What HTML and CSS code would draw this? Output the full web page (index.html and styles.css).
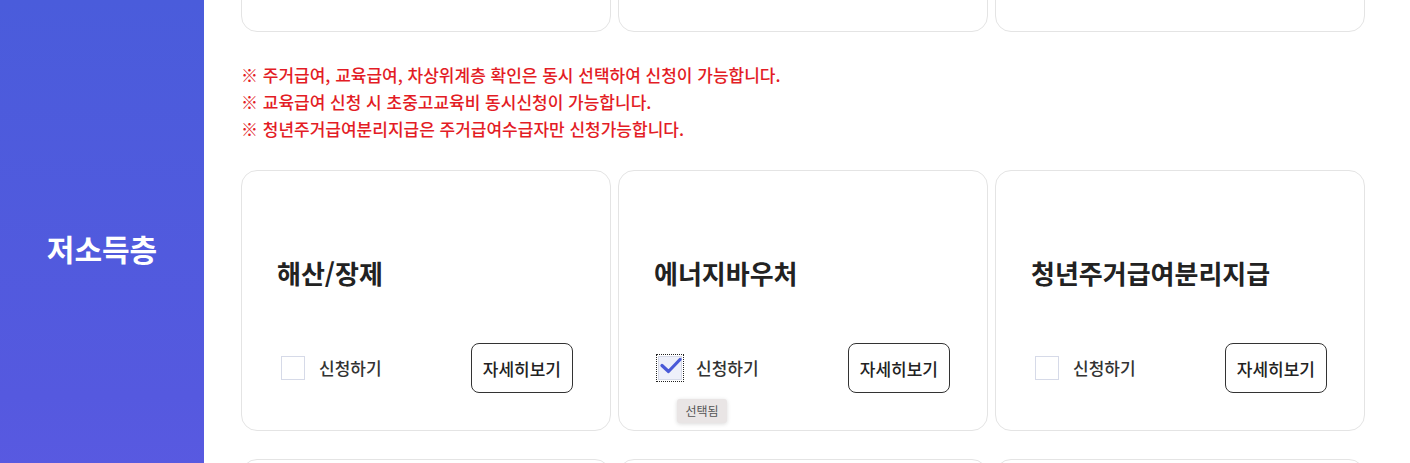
FILE: index.html
```html
<!DOCTYPE html>
<html lang="ko">
<head>
<meta charset="utf-8">
<title>저소득층</title>
<link rel="stylesheet" href="styles.css">
</head>
<body>
<div class="section">
  <aside class="side"><h2 class="side-title">저소득층</h2></aside>
  <main class="main">
    <div class="grid grid-top">
      <div class="card"></div>
      <div class="card"></div>
      <div class="card"></div>
    </div>
    <ul class="notes">
      <li>※ 주거급여, 교육급여, 차상위계층 확인은 동시 선택하여 신청이 가능합니다.</li>
      <li>※ 교육급여 신청 시 초중고교육비 동시신청이 가능합니다.</li>
      <li>※ 청년주거급여분리지급은 주거급여수급자만 신청가능합니다.</li>
    </ul>
    <div class="grid">
      <div class="card">
        <h3 class="card-title">해산/장제</h3>
        <div class="card-foot">
          <label class="check"><span class="box"></span><span class="check-label">신청하기</span></label>
          <button class="btn">자세히보기</button>
        </div>
      </div>
      <div class="card">
        <h3 class="card-title">에너지바우처</h3>
        <div class="card-foot">
          <label class="check"><span class="box checked"><svg viewBox="0 0 24 24" width="24" height="24"><path d="M4 9.5 L10.5 15.5 L22 3.5" fill="none" stroke="#4a5ad8" stroke-width="3.2" stroke-linecap="round" stroke-linejoin="round"/></svg><span class="tip">선택됨</span></span><span class="check-label">신청하기</span></label>
          <button class="btn">자세히보기</button>
        </div>
      </div>
      <div class="card">
        <h3 class="card-title">청년주거급여분리지급</h3>
        <div class="card-foot">
          <label class="check"><span class="box"></span><span class="check-label">신청하기</span></label>
          <button class="btn">자세히보기</button>
        </div>
      </div>
    </div>
    <div class="grid grid-bottom">
      <div class="card"></div>
      <div class="card"></div>
      <div class="card"></div>
    </div>
  </main>
</div>
</body>
</html>
```
FILE: styles.css
```css
* { box-sizing: border-box; }
html, body { margin: 0; padding: 0; }
body {
  width: 1410px;
  height: 463px;
  overflow: hidden;
  background: #fff;
  font-family: "Noto Sans CJK KR", "Noto Sans", sans-serif;
  color: #222;
}
.section {
  display: flex;
  align-items: stretch;
  min-height: 463px;
}
.side {
  width: 204px;
  flex: none;
  background: linear-gradient(180deg, #4a5cdb 0%, #5559df 55%, #645be6 100%);
  display: flex;
  justify-content: center;
  align-items: flex-start;
  padding-top: 229px;
}
.side-title {
  margin: 0;
  color: #fff;
  font-size: 30px;
  font-weight: 700;
  line-height: 38px;
}
.main {
  padding-left: 37px;
  flex: 1;
}
.grid {
  display: grid;
  grid-template-columns: repeat(3, 370px);
  column-gap: 7px;
}
.grid-top { margin-top: -229px; }
.grid-bottom { margin-top: 28px; }
.card {
  height: 261px;
  border: 1px solid #e4e4e4;
  border-radius: 16px;
  background: #fff;
  display: flex;
  flex-direction: column;
  padding: 0 37px 37px 35px;
}
.notes {
  list-style: none;
  margin: 0;
  padding: 29px 0 28px;
  color: #e31c25;
  font-size: 17px;
  font-weight: 500;
  line-height: 27px;
}
.card-title {
  margin: 84px 0 0;
  font-size: 26px;
  font-weight: 700;
  line-height: 36px;
  color: #222;
}
.card-foot {
  margin-top: auto;
  display: flex;
  align-items: center;
  justify-content: space-between;
}
.check {
  display: flex;
  align-items: center;
  gap: 14px;
  padding-left: 4px;
}
.box {
  position: relative;
  width: 24px;
  height: 24px;
  border: 1px solid #d6dae8;
  background: #fff;
  display: block;
}
.box.checked {
  background: #eef0fa;
  outline: 1px dotted #222;
  outline-offset: 1px;
}
.box svg { position: absolute; left: -1px; top: -1px; }
.tip {
  position: absolute;
  left: 18px;
  top: 42px;
  width: 50px;
  height: 24px;
  background: #e9e5e5;
  border-radius: 3px;
  box-shadow: 0 1px 4px rgba(0,0,0,0.15);
  font-size: 12px;
  line-height: 24px;
  text-align: center;
  color: #555;
}
.check-label {
  font-size: 17px;
  font-weight: 500;
  color: #333;
  line-height: 24px;
}
.btn {
  height: 50px;
  padding: 0 11px;
  border: 1px solid #333;
  border-radius: 8px;
  background: #fff;
  font-family: inherit;
  font-size: 17px;
  font-weight: 500;
  color: #222;
}
```
